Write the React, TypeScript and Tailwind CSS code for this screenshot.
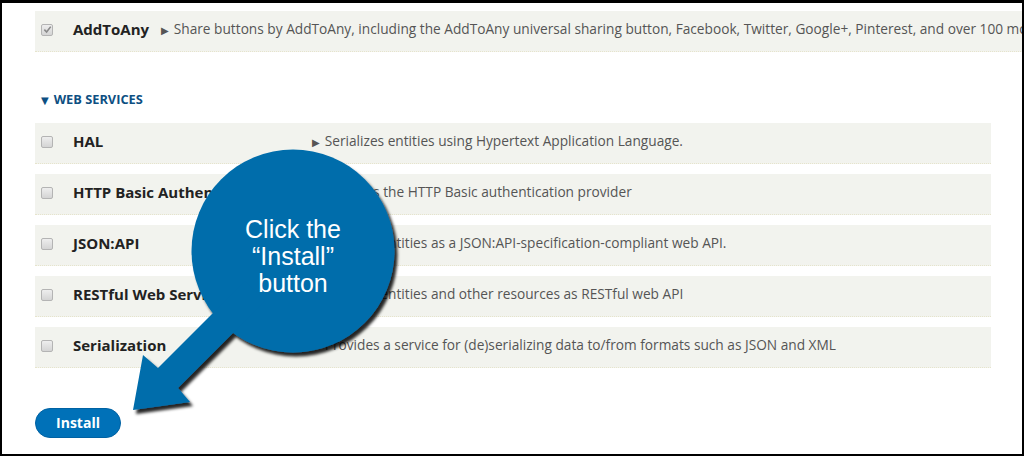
import React from 'react';

type Module = { name: string; desc: string };

const services: Module[] = [
  { name: 'HAL', desc: 'Serializes entities using Hypertext Application Language.' },
  { name: 'HTTP Basic Authentication', desc: 'Provides the HTTP Basic authentication provider' },
  { name: 'JSON:API', desc: 'Exposes entities as a JSON:API-specification-compliant web API.' },
  { name: 'RESTful Web Services', desc: 'Exposes entities and other resources as RESTful web API' },
  { name: 'Serialization', desc: 'Provides a service for (de)serializing data to/from formats such as JSON and XML' },
];

const Checkbox: React.FC<{ checked?: boolean }> = ({ checked }) => (
  <span className="flex h-[12px] w-[12px] shrink-0 items-center justify-center rounded-[2px] border border-[#b4b4b4] bg-gradient-to-b from-[#eeeeee] to-[#d4d4d4]">
    {checked && (
      <svg width="9" height="9" viewBox="0 0 10 10">
        <path d="M1.5 5.2 L4 7.8 L8.6 1.8" fill="none" stroke="#8a8a8a" strokeWidth="1.8" />
      </svg>
    )}
  </span>
);

const Row: React.FC<{ m: Module; checked?: boolean; wide?: boolean }> = ({ m, checked, wide }) => (
  <div
    className={`flex h-[41px] shrink-0 items-center border-b border-dotted border-[#e6e4cc] bg-[#f2f3ee] pb-[3px] ${
      wide ? 'w-[1010px]' : 'w-[956px]'
    }`}
  >
    <div className="flex w-[38px] shrink-0 justify-start pl-[6px]">
      <Checkbox checked={checked} />
    </div>
    {wide ? (
      <>
        <span className="whitespace-nowrap text-[15px] font-bold text-[#222]">{m.name}</span>
        <span className="ml-[12px] whitespace-nowrap text-[13.7px] text-[#555]">
          <span className="mr-[5px] text-[10px] text-[#555]">▶</span>
          {m.desc}
        </span>
      </>
    ) : (
      <>
        <span className="w-[239px] shrink-0 whitespace-nowrap text-[15px] font-bold text-[#222]">{m.name}</span>
        <span className="whitespace-nowrap text-[13.7px] text-[#555]">
          <span className="mr-[5px] text-[10px] text-[#555]">▶</span>
          {m.desc}
        </span>
      </>
    )}
  </div>
);

export default function App() {
  return (
    <div className="h-[456px] w-[1024px] overflow-hidden bg-black pb-[2px] pl-[2px] pr-[2px] pt-[3px]">
      <div
        className="relative flex h-full w-full flex-col overflow-hidden bg-white pl-[33px] pt-[8px]"
        style={{ fontFamily: '"Open Sans", "DejaVu Sans", sans-serif' }}
      >
        <Row
          wide
          checked
          m={{
            name: 'AddToAny',
            desc: 'Share buttons by AddToAny, including the AddToAny universal sharing button, Facebook, Twitter, Google+, Pinterest, and over 100 more.',
          }}
        />

        <div className="mt-[40px] flex h-[16px] items-center gap-[5px] pl-[6px] text-[12.8px] font-bold text-[#0d4f82]">
          <span className="text-[10px]">▼</span>
          <span>WEB SERVICES</span>
        </div>

        <div className="mt-[15px] flex flex-col gap-[10px]">
          {services.map((m) => (
            <Row key={m.name} m={m} />
          ))}
        </div>

        <div className="mt-[40px]">
          <button className="h-[30px] w-[86px] rounded-full border border-[#0062a3] bg-[#0071b8] pb-[2px] text-[14px] font-bold text-white">
            Install
          </button>
        </div>

        {/* callout */}
        <svg className="pointer-events-none absolute left-[-2px] top-[-3px]" width="1024" height="456" viewBox="0 0 1024 456">
          <defs>
            <filter id="sh" x="-20%" y="-20%" width="140%" height="140%">
              <feDropShadow dx="3" dy="4" stdDeviation="1.6" floodColor="#000" floodOpacity="0.85" />
            </filter>
          </defs>
          <g filter="url(#sh)" fill="#066dab">
            <circle cx="293" cy="251" r="101.5" />
            <polygon points="133,410 143,355 158,368 245,281 265,301 178,388 190,402" />
          </g>
        </svg>
        <div
          className="pointer-events-none absolute left-[191px] top-[213px] w-[200px] text-center text-[25px] leading-[27px] text-white"
          style={{ fontFamily: '"Liberation Sans", Arial, sans-serif' }}
        >
          Click the
          <br />
          “Install”
          <br />
          button
        </div>
      </div>
    </div>
  );
}
